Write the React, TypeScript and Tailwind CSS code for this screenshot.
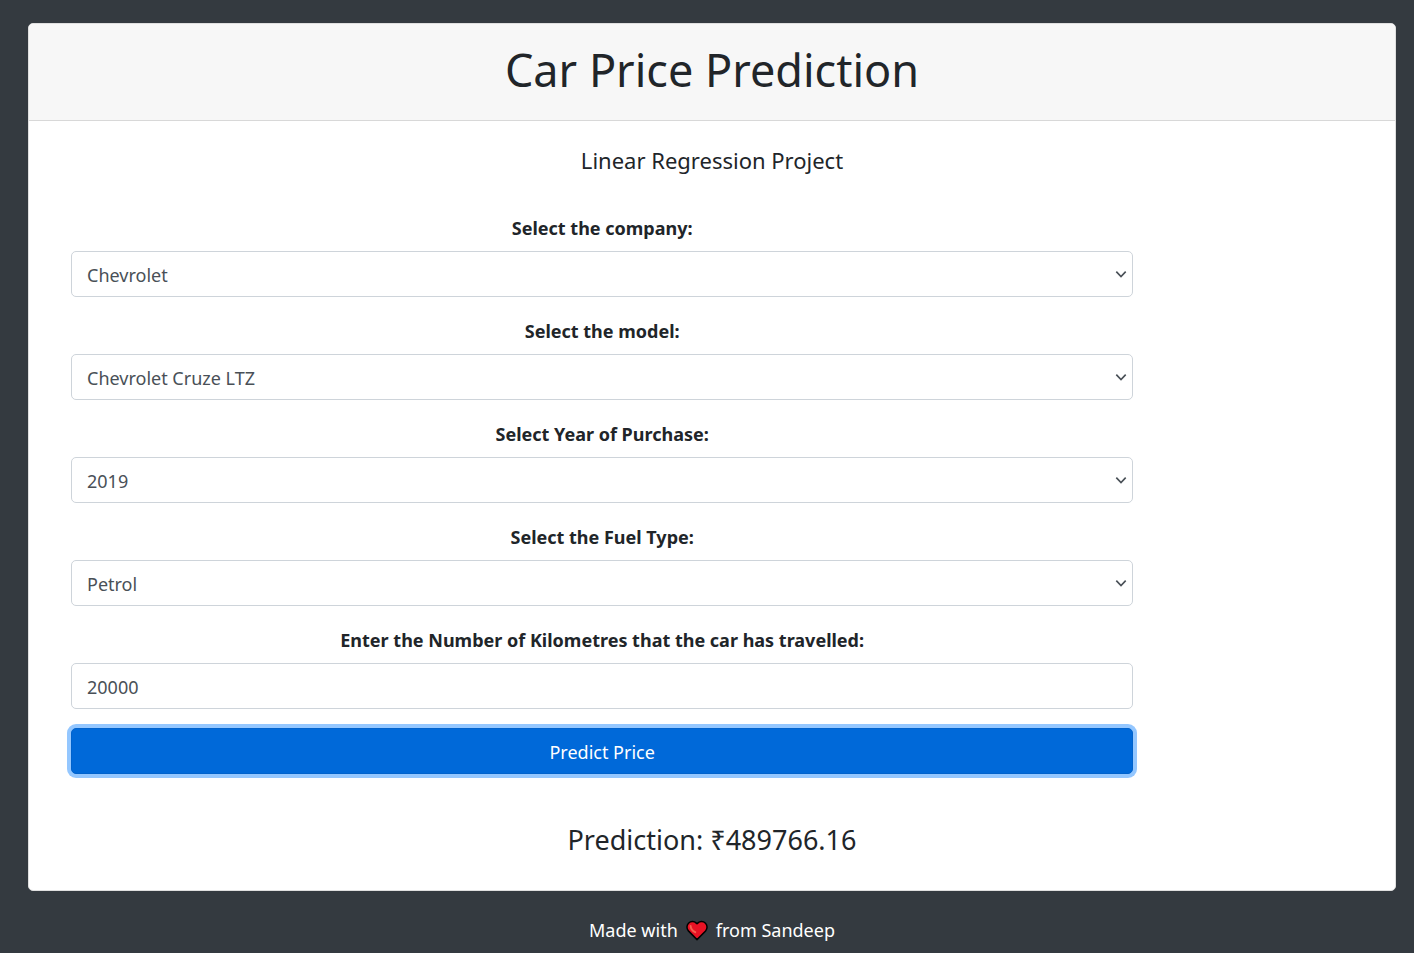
import { useState } from "react";

type SelectFieldProps = {
  id: string;
  label: string;
  options: string[];
};

const labelClass = "text-center text-lg leading-[29px] font-bold text-[#212529]";
const controlClass =
  "h-[46px] w-full appearance-none rounded-[5px] border border-[#ced4da] bg-white px-[15px] pt-[2px] text-lg text-[#495057] outline-none";

function SelectField({ id, label, options }: SelectFieldProps) {
  return (
    <div className="flex flex-col items-center gap-2">
      <label htmlFor={id} className={labelClass}>
        {label}
      </label>
      <div className="relative w-full">
        <select id={id} defaultValue={options[0]} className={controlClass}>
          {options.map((option) => (
            <option key={option}>{option}</option>
          ))}
        </select>
        <svg
          className="pointer-events-none absolute top-1/2 right-[6px] h-3 w-3 -translate-y-1/2"
          viewBox="0 0 12 12"
          fill="none"
          stroke="#495057"
          strokeWidth="1.6"
          aria-hidden="true"
        >
          <path d="M1.3 3.6 L6 8.6 L10.7 3.6" />
        </svg>
      </div>
    </div>
  );
}

function Heart() {
  return (
    <svg className="h-[22px] w-[22px]" viewBox="0 0 22 22" aria-hidden="true">
      <path
        d="M11 19.6 L2.4 10.9 C0.4 8.8 0.5 5.2 2.5 3.2 C4.7 1 8.2 1 10.3 3.1 L11 3.8 L11.7 3.1 C13.8 1 17.3 1 19.5 3.2 C21.5 5.2 21.6 8.8 19.6 10.9 Z"
        fill="#e81224"
        stroke="#000000"
        strokeWidth="1.5"
        strokeLinejoin="round"
      />
      <path
        d="M4.6 6 C4.7 8.6 6.6 10.9 9.2 12.2"
        fill="none"
        stroke="#f4604f"
        strokeWidth="2"
        strokeLinecap="round"
      />
    </svg>
  );
}

export default function App() {
  const [kilometres, setKilometres] = useState("20000");

  return (
    <div className="min-h-screen bg-[#343a40] pt-[23px] pr-[18px] pl-7 font-['Noto_Sans',sans-serif] text-[#212529]">
      <main className="rounded-[5px] border border-[#dfdfdf] bg-white">
        <header className="rounded-t-[4px] border-b border-[#d8d8d8] bg-[#f7f7f7] pt-[18px] pb-[22px] text-center">
          <h1 className="text-[45px] leading-14">Car Price Prediction</h1>
        </header>

        <div className="px-6 pt-[22px] pb-[30px]">
          <h2 className="text-center text-[22px] leading-[34px]">Linear Regression Project</h2>

          <form
            className="mt-[37px] w-5/6 px-[18px]"
            onSubmit={(event) => event.preventDefault()}
          >
            <div className="flex flex-col gap-5">
              <SelectField id="company" label="Select the company:" options={["Chevrolet"]} />
              <SelectField id="model" label="Select the model:" options={["Chevrolet Cruze LTZ"]} />
              <SelectField id="year" label="Select Year of Purchase:" options={["2019"]} />
              <SelectField id="fuel" label="Select the Fuel Type:" options={["Petrol"]} />
              <div className="flex flex-col items-center gap-2">
                <label htmlFor="kilometres" className={labelClass}>
                  Enter the Number of Kilometres that the car has travelled:
                </label>
                <input
                  id="kilometres"
                  type="text"
                  value={kilometres}
                  onChange={(event) => setKilometres(event.target.value)}
                  className={controlClass}
                />
              </div>
            </div>
            <button
              type="submit"
              className="mt-[19px] block h-[46px] w-full rounded-[5px] border border-[#0062cc] bg-[#0069d9] pt-[2px] text-lg text-white ring-4 ring-[#94c7ff] outline-none"
            >
              Predict Price
            </button>
          </form>

          <p className="mt-[46px] text-center text-[27px] leading-10">Prediction: ₹489766.16</p>
        </div>
      </main>

      <footer className="flex items-center justify-center gap-2 pt-[25px] pb-2 text-lg leading-[29px] text-white">
        <span>Made with</span>
        <Heart />
        <span>from Sandeep</span>
      </footer>
    </div>
  );
}
